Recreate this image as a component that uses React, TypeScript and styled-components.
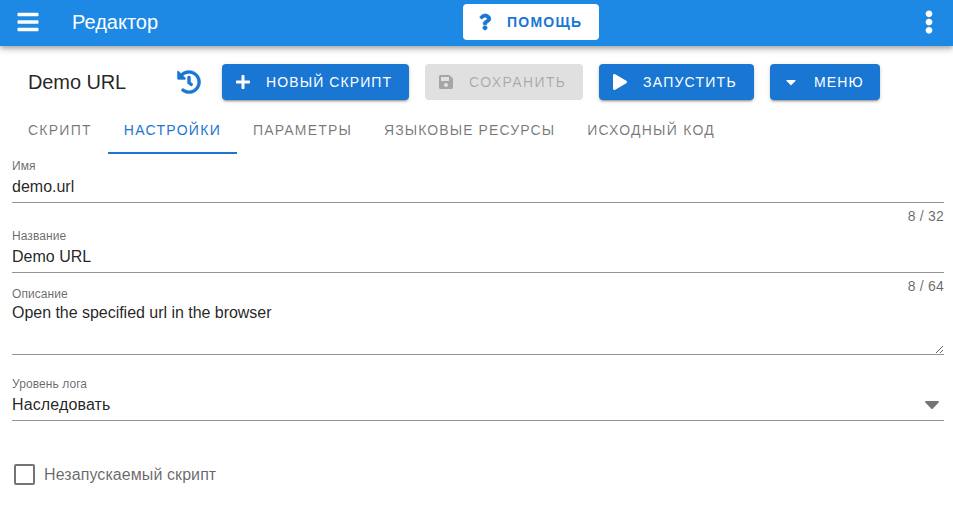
import React from 'react';
import styled, { createGlobalStyle } from 'styled-components';
import { FaBars, FaEllipsisV, FaHistory, FaPlus, FaSave, FaPlay, FaCaretDown, FaQuestion } from 'react-icons/fa';

const GlobalStyle = createGlobalStyle`
  *, *::before, *::after { box-sizing: border-box; }
  html, body { margin: 0; overflow: hidden; background: #fff; }
  body { font: 16px/24px "Liberation Sans", Arial, sans-serif; color: rgba(0, 0, 0, 0.87); }
  svg { display: block; }
`;

const AppBar = styled.header`
  display: grid;
  grid-template-columns: 463px 136px 1fr;
  align-items: center;
  height: 46px;
  padding-bottom: 2px;
  background: #1e88e5;
  color: #fff;
  box-shadow: 0 2px 4px -1px rgba(0, 0, 0, 0.2), 0 4px 5px 0 rgba(0, 0, 0, 0.14), 0 1px 10px 0 rgba(0, 0, 0, 0.12);
`;

const BarStart = styled.div`
  display: flex;
  align-items: center;
  gap: 32px;
  padding-left: 16px;
`;

const BarEnd = styled.div`
  display: flex;
  justify-content: flex-end;
  padding-right: 12.5px;
`;

const BarTitle = styled.h1`
  margin: 0;
  font-size: 20px;
  font-weight: 400;
`;

const Button = styled.button<{ $kind?: 'primary' | 'light'; $width: number; $spacing?: number }>`
  display: flex;
  align-items: center;
  flex: none;
  width: ${p => p.$width}px;
  height: 36px;
  padding: 0 0 0 12px;
  border: 0;
  border-radius: 4px;
  font: ${p => (p.$kind === 'light' ? 700 : 400)} 14px/20px "Liberation Sans", Arial, sans-serif;
  letter-spacing: ${p => p.$spacing ?? 1.25}px;
  text-transform: uppercase;
  white-space: nowrap;
  color: ${p => (p.$kind === 'light' ? '#1976d2' : '#fff')};
  background: ${p => (p.$kind === 'light' ? '#fff' : '#1976d2')};
  box-shadow: ${p => (p.$kind === 'light' ? 'none' : '0 3px 1px -2px rgba(0,0,0,.2), 0 2px 2px 0 rgba(0,0,0,.14), 0 1px 5px 0 rgba(0,0,0,.12)')};
  &:disabled {
    color: rgba(0, 0, 0, 0.26);
    background: #e0e0e0;
    box-shadow: none;
  }
`;

const ButtonIcon = styled.span<{ $wide?: boolean }>`
  display: flex;
  justify-content: center;
  width: ${p => (p.$wide ? 20 : 18)}px;
  margin-right: ${p => (p.$wide ? 12 : 14)}px;
  font-size: 16px;
  svg {
    overflow: visible;
    stroke-width: ${p => (p.$wide ? 20 : 0)}px;
  }
`;

const Toolbar = styled.section`
  display: flex;
  align-items: center;
  gap: 16px;
  height: 36px;
  margin-top: 18px;
  padding-left: 28px;
`;

const ScriptTitle = styled.h2`
  width: 133px;
  margin: 0;
  font-size: 20px;
  font-weight: 400;
  letter-spacing: -0.1px;
  white-space: nowrap;
`;

const HistoryButton = styled.span`
  width: 29px;
  color: #1976d2;
  svg {
    overflow: visible;
    stroke-width: 8px;
  }
`;

const Tabs = styled.nav`
  display: flex;
  height: 48px;
  margin-top: 6px;
  padding-left: 12px;
`;

const Tab = styled.a<{ $active?: boolean; $spacing: number }>`
  display: flex;
  align-items: center;
  padding: 2px 16px 0;
  border-bottom: 2px solid ${p => (p.$active ? '#1976d2' : 'transparent')};
  color: ${p => (p.$active ? '#1976d2' : 'rgba(0, 0, 0, 0.54)')};
  font-size: 14px;
  letter-spacing: ${p => p.$spacing}px;
  text-transform: uppercase;
  white-space: nowrap;
`;

const Form = styled.form`
  padding: 4px 9px 0 12px;
`;

const Field = styled.div<{ $height: number }>`
  height: ${p => p.$height}px;
`;

const Label = styled.label`
  display: block;
  height: 16px;
  font-size: 12px;
  line-height: 16px;
  letter-spacing: 0.08px;
  color: rgba(0, 0, 0, 0.6);
`;

const Control = styled.div`
  display: flex;
  align-items: center;
  justify-content: space-between;
  height: 29px;
  padding-bottom: 3px;
  border-bottom: 1px solid #949494;
`;

const Input = styled.input`
  width: 100%;
  padding: 0;
  border: 0;
  outline: 0;
  background: transparent;
  font: inherit;
  color: inherit;
`;

const TextArea = styled.textarea`
  display: block;
  width: 100%;
  height: 53px;
  padding: 0;
  border: 0;
  border-bottom: 1px solid #949494;
  outline: 0;
  resize: vertical;
  font: 16px/22px "Liberation Sans", Arial, sans-serif;
  letter-spacing: -0.03px;
  color: inherit;
`;

const Counter = styled.div`
  margin-top: 3px;
  font-size: 14px;
  line-height: 20px;
  letter-spacing: 0.2px;
  text-align: right;
  color: rgba(0, 0, 0, 0.6);
`;

const SelectValue = styled.span`
  letter-spacing: 0.13px;
`;

const SelectIcon = styled.span`
  color: #757575;
  margin: -2px 0 0 0;
`;

const CheckRow = styled.label`
  display: flex;
  align-items: center;
  gap: 9px;
  height: 24px;
  padding-left: 2px;
  letter-spacing: 0.08px;
  color: rgba(0, 0, 0, 0.6);
`;

const CheckText = styled.span`
  padding-top: 2px;
`;

const Box = styled.span`
  width: 21px;
  height: 21px;
  border: 2px solid #757575;
  border-radius: 2px;
`;

const tabs = [
  { title: 'Скрипт', spacing: 1.25 },
  { title: 'Настройки', spacing: 1.3 },
  { title: 'Параметры', spacing: 1.17 },
  { title: 'Языковые ресурсы', spacing: 1.09 },
  { title: 'Исходный код', spacing: 1.25 },
];

function TextField({ label, value, limit, height }: { label: string; value: string; limit: number; height: number }) {
  return (
    <Field $height={height}>
      <Label>{label}</Label>
      <Control><Input defaultValue={value} /></Control>
      <Counter>{value.length} / {limit}</Counter>
    </Field>
  );
}

export default function App() {
  return (
    <>
      <GlobalStyle />
      <AppBar>
        <BarStart><FaBars size={24} /><BarTitle>Редактор</BarTitle></BarStart>
        <Button $kind="light" $width={136}><ButtonIcon $wide><FaQuestion /></ButtonIcon>Помощь</Button>
        <BarEnd><FaEllipsisV size={24} /></BarEnd>
      </AppBar>
      <Toolbar>
        <ScriptTitle>Demo URL</ScriptTitle>
        <HistoryButton><FaHistory size={24} /></HistoryButton>
        <Button $width={187} $spacing={1.1}><ButtonIcon><FaPlus /></ButtonIcon>Новый скрипт</Button>
        <Button $width={158} $spacing={1.37} disabled><ButtonIcon><FaSave /></ButtonIcon>Сохранить</Button>
        <Button $width={155}><ButtonIcon><FaPlay /></ButtonIcon>Запустить</Button>
        <Button $width={110} $spacing={1.1}><ButtonIcon><FaCaretDown /></ButtonIcon>Меню</Button>
      </Toolbar>
      <Tabs>
        {tabs.map((tab, i) => <Tab key={tab.title} $active={i === 1} $spacing={tab.spacing}>{tab.title}</Tab>)}
      </Tabs>
      <Form>
        <TextField label="Имя" value="demo.url" limit={32} height={70} />
        <TextField label="Название" value="Demo URL" limit={64} height={58} />
        <Field $height={90}>
          <Label>Описание</Label>
          <TextArea defaultValue="Open the specified url in the browser" />
        </Field>
        <Field $height={86}>
          <Label>Уровень лога</Label>
          <Control><SelectValue>Наследовать</SelectValue><SelectIcon><FaCaretDown size={24} /></SelectIcon></Control>
        </Field>
        <CheckRow><Box /><CheckText>Незапускаемый скрипт</CheckText></CheckRow>
      </Form>
    </>
  );
}
